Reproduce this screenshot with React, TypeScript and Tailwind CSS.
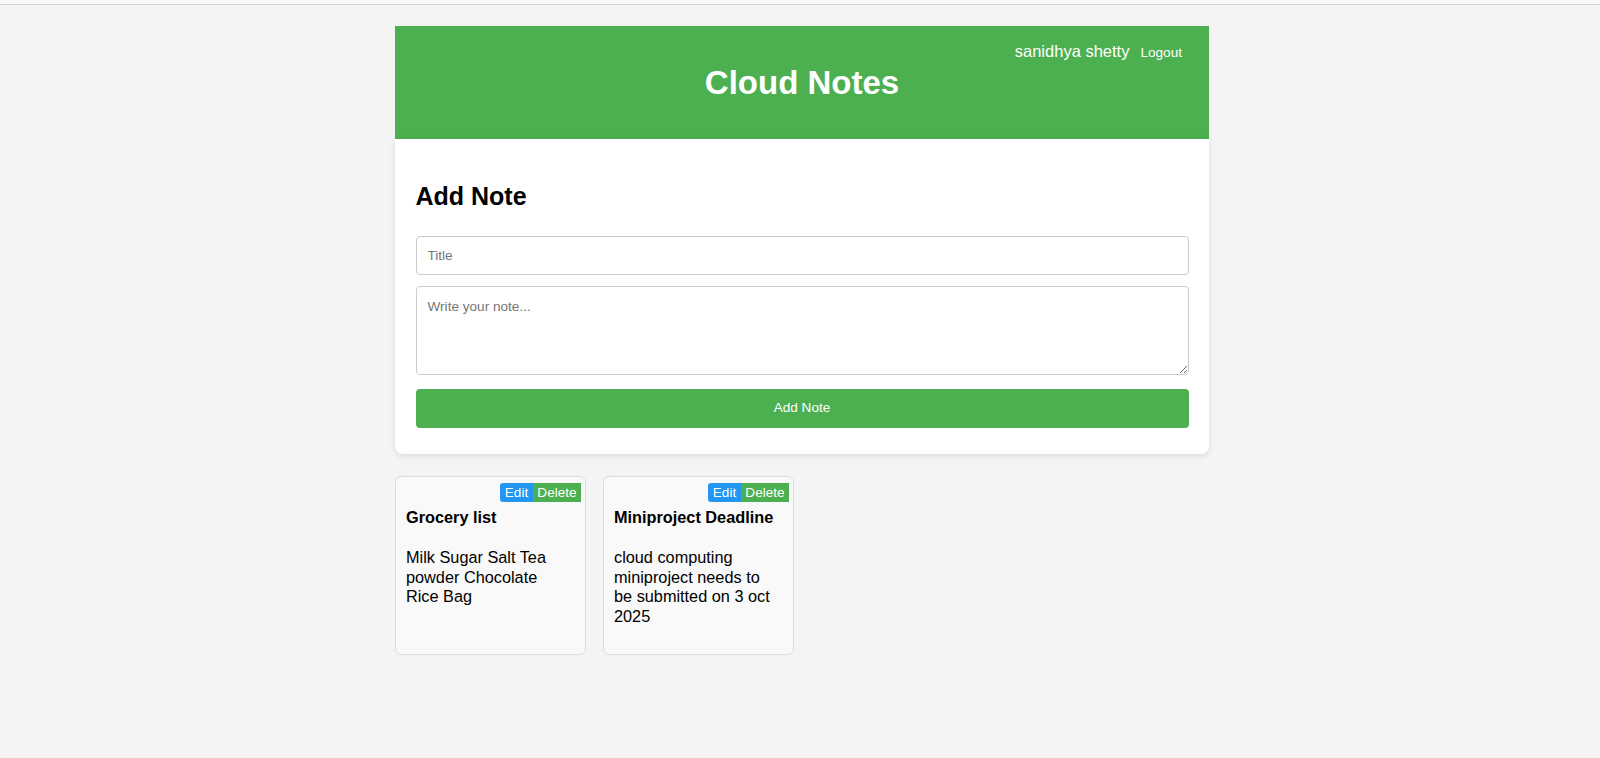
const notes = [
  {
    id: 1,
    title: "Grocery list",
    body: "Milk Sugar Salt Tea powder Chocolate Rice Bag",
  },
  {
    id: 2,
    title: "Miniproject Deadline",
    body: "cloud computing miniproject needs to be submitted on 3 oct 2025",
  },
];

function NoteCard({ title, body }: { title: string; body: string }) {
  return (
    <div className="w-[191px] h-[179px] bg-[#f9f9f9] border border-[#ddd] rounded-[6px] pt-[5.5px] pr-[4px] pl-[10px]">
      <div className="flex justify-end h-[19px]">
        <button className="w-[33px] h-[19px] bg-[#2196F3] text-white text-[13.6px] leading-[19px] rounded-l-[3px]">
          Edit
        </button>
        <button className="w-[48px] h-[19px] bg-[#4CAF50] text-white text-[13.6px] leading-[19px]">
          Delete
        </button>
      </div>
      <h3 className="mt-[6px] font-bold text-[16.3px] leading-[19.5px] text-black">{title}</h3>
      <p className="mt-[21px] pr-[8px] text-[16.3px] leading-[19.5px] text-black">{body}</p>
    </div>
  );
}

export default function App() {
  return (
    <div className="min-h-screen bg-[#f4f4f4] font-['Liberation_Sans',Arial,sans-serif]">
      <div className="h-[4px] bg-[#f8f8f8]" />
      <div className="h-px bg-[#d4d4d4]" />
      <div className="pt-[21px] pb-10">
        <div className="w-[814px] ml-[calc(50%-405px)]">
          <header className="h-[113px] bg-[#4CAF50] pt-[16px]">
            <div className="flex justify-end items-baseline gap-[11px] h-[19px] pr-[27px]">
              <span className="text-white text-[16.5px] leading-[19px]">sanidhya shetty</span>
              <button className="text-white text-[13.6px] leading-[19px]">Logout</button>
            </div>
            <h1 className="mt-[3px] text-center text-white font-bold text-[33px] leading-[37px]">
              Cloud Notes
            </h1>
          </header>

          <div className="bg-white rounded-b-[8px] shadow-[0_2px_6px_rgba(0,0,0,0.1)] px-[20.5px] pt-[43px] pb-[26px]">
            <h2 className="font-bold text-[25px] leading-[28px] text-black">Add Note</h2>
            <input
              type="text"
              placeholder="Title"
              className="mt-[26px] block w-full h-[39px] px-[11px] border border-[#ccc] rounded-[4px] text-[13.6px] text-black placeholder:text-[#767676] outline-none"
            />
            <textarea
              placeholder="Write your note..."
              className="mt-[11px] block w-full h-[89px] px-[11px] py-[10px] border border-[#ccc] rounded-[4px] text-[13.6px] text-black placeholder:text-[#767676] outline-none"
            />
            <button className="mt-[14px] block w-full h-[39px] bg-[#4CAF50] text-white text-[13.6px] rounded-[4px]">
              Add Note
            </button>
          </div>

          <div className="mt-[22px] flex flex-wrap gap-[17px]">
            {notes.map((n) => (
              <NoteCard key={n.id} title={n.title} body={n.body} />
            ))}
          </div>
        </div>
      </div>
    </div>
  );
}
